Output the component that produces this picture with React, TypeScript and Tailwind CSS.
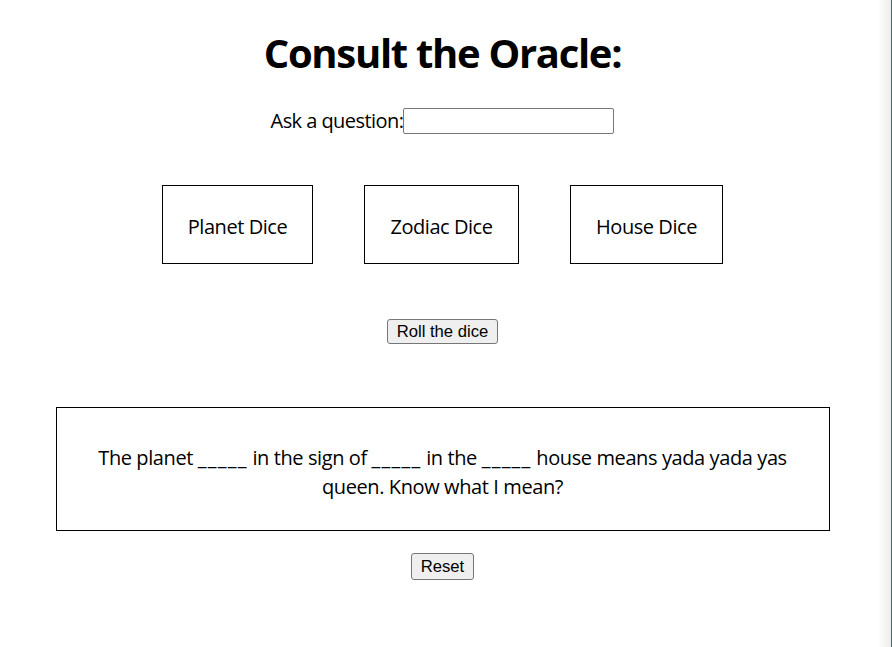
import React from "react";

function Blank() {
  return <span className="tracking-[1.2px]">_____</span>;
}

export default function App() {
  return (
    <div className="relative min-h-[647px] w-full bg-white text-black overflow-hidden">
      <div className="flex flex-col items-center pr-[7px] [font-family:'Open_Sans','Noto_Sans',sans-serif]">
        <h1 className="mt-[27px] text-[40px] font-bold leading-[52px] tracking-[-1.3px]">
          Consult the Oracle:
        </h1>
        <div className="mt-[29px] flex items-center h-[26px] text-[20px] leading-[26px]">
          <label className="tracking-[-0.55px]">Ask a question:</label>
          <input
            type="text"
            className="w-[211px] h-[26px] border border-[#767676] rounded-[2px] bg-white px-1 outline-none"
          />
        </div>
        <div className="mt-[51px] flex items-center gap-[51px] text-[20px] tracking-[-0.45px]">
          <div className="w-[151px] h-[79px] pt-[5px] border border-black flex items-center justify-center">
            Planet Dice
          </div>
          <div className="w-[155px] h-[79px] pt-[5px] border border-black flex items-center justify-center">
            Zodiac Dice
          </div>
          <div className="w-[153px] h-[79px] pt-[5px] border border-black flex items-center justify-center">
            House Dice
          </div>
        </div>
        <button className="mt-[55px] w-[111px] h-[25px] border border-[#767676] rounded-[3px] bg-[#efefef] text-[16.67px] leading-[20px] [font-family:'Liberation_Sans',Arial,sans-serif]">
          Roll the dice
        </button>
        <div className="mt-[63px] w-[774px] h-[124px] pt-[6px] border border-black flex items-center justify-center text-center text-[20px] leading-[29px] tracking-[-0.4px]">
          <p>
            The planet <Blank /> in the sign of <Blank /> in the <Blank /> house means yada yada yas
            <br />
            queen. Know what I mean?
          </p>
        </div>
        <button className="mt-[22px] w-[63px] h-[27px] border border-[#767676] rounded-[3px] bg-[#efefef] text-[16.67px] leading-[20px] [font-family:'Liberation_Sans',Arial,sans-serif]">
          Reset
        </button>
      </div>
      <div className="pointer-events-none absolute top-0 right-[1px] h-full w-[13px] bg-gradient-to-r from-white to-[#ececec]" />
      <div className="pointer-events-none absolute top-0 right-0 h-full w-[1px] bg-[#3d6e6a]" />
    </div>
  );
}
